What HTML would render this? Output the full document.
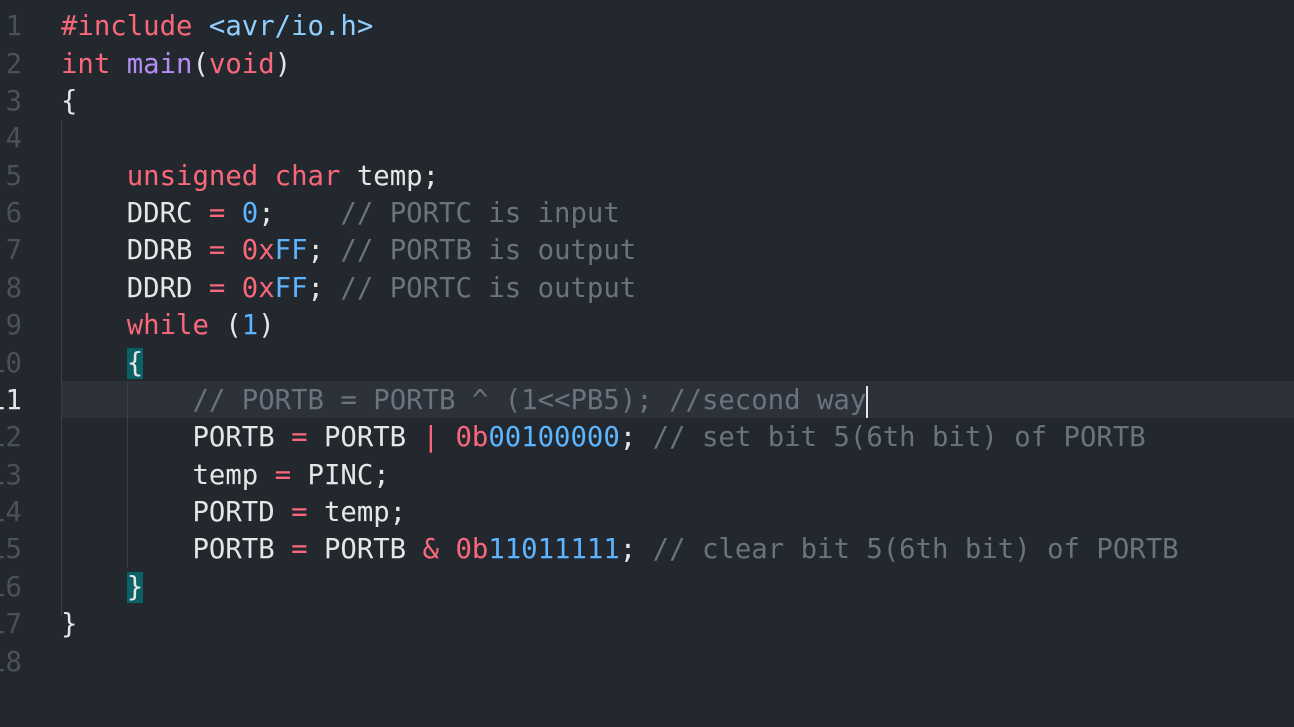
<!DOCTYPE html>
<html><head><meta charset="utf-8"><style>
body{margin:0;background:#23272e;width:1294px;height:727px;overflow:hidden;position:relative;font-family:"DejaVu Sans Mono","Liberation Mono",monospace;font-size:27.3px;}
.ln{position:absolute;left:-50px;width:72px;text-align:right;color:#4b5158;white-space:pre;height:37.4px;line-height:37.4px;margin-top:1px}
.c{position:absolute;left:61px;white-space:pre;color:#e6e6e6;height:37.4px;line-height:37.4px;margin-top:1px}
.k{color:#f9687a}.n{color:#5eb5ff}.f{color:#b48ef2}.s{color:#8fcfff}.m{color:#6b737c}.p{color:#e6e6e6}
.hl{position:absolute;left:61px;right:0;top:381px;height:37px;background:#2c313a}
.g{position:absolute;width:1px;background:#3a3f47}
.br{background:#0b6166}
</style></head><body>
<div class="hl"></div>
<div class="g" style="left:61px;top:120px;height:495px"></div>
<div class="g" style="left:127px;top:381px;height:187px"></div>
<div class="ln" style="top:7px">1</div><div class="c" style="top:7px"><span class="k">#include</span> <span class="s">&lt;avr/io.h&gt;</span></div>
<div class="ln" style="top:45px">2</div><div class="c" style="top:45px"><span class="k">int</span> <span class="f">main</span>(<span class="k">void</span>)</div>
<div class="ln" style="top:82px">3</div><div class="c" style="top:82px">{</div>
<div class="ln" style="top:119px">4</div>
<div class="ln" style="top:157px">5</div><div class="c" style="top:157px">    <span class="k">unsigned char</span> temp;</div>
<div class="ln" style="top:194px">6</div><div class="c" style="top:194px">    DDRC <span class="k">=</span> <span class="n">0</span>;    <span class="m">// PORTC is input</span></div>
<div class="ln" style="top:231px">7</div><div class="c" style="top:231px">    DDRB <span class="k">=</span> <span class="k">0x</span><span class="n">FF</span>; <span class="m">// PORTB is output</span></div>
<div class="ln" style="top:269px">8</div><div class="c" style="top:269px">    DDRD <span class="k">=</span> <span class="k">0x</span><span class="n">FF</span>; <span class="m">// PORTC is output</span></div>
<div class="ln" style="top:306px">9</div><div class="c" style="top:306px">    <span class="k">while</span> (<span class="n">1</span>)</div>
<div class="ln" style="top:344px">10</div><div class="c" style="top:344px">    <span class="br">{</span></div>
<div class="ln" style="top:381px;color:#e6e6e6">11</div><div class="c" style="top:381px">        <span class="m">// PORTB = PORTB ^ (1&lt;&lt;PB5); //second way</span><span style="display:inline-block;width:2px;height:32px;background:#e6e6e6;vertical-align:middle"></span></div>
<div class="ln" style="top:418px">12</div><div class="c" style="top:418px">        PORTB <span class="k">=</span> PORTB <span class="k">|</span> <span class="k">0b</span><span class="n">00100000</span>; <span class="m">// set bit 5(6th bit) of PORTB</span></div>
<div class="ln" style="top:456px">13</div><div class="c" style="top:456px">        temp <span class="k">=</span> PINC;</div>
<div class="ln" style="top:493px">14</div><div class="c" style="top:493px">        PORTD <span class="k">=</span> temp;</div>
<div class="ln" style="top:530px">15</div><div class="c" style="top:530px">        PORTB <span class="k">=</span> PORTB <span class="k">&amp;</span> <span class="k">0b</span><span class="n">11011111</span>; <span class="m">// clear bit 5(6th bit) of PORTB</span></div>
<div class="ln" style="top:568px">16</div><div class="c" style="top:568px">    <span class="br">}</span></div>
<div class="ln" style="top:605px">17</div><div class="c" style="top:605px">}</div>
<div class="ln" style="top:643px">18</div>
</body></html>
